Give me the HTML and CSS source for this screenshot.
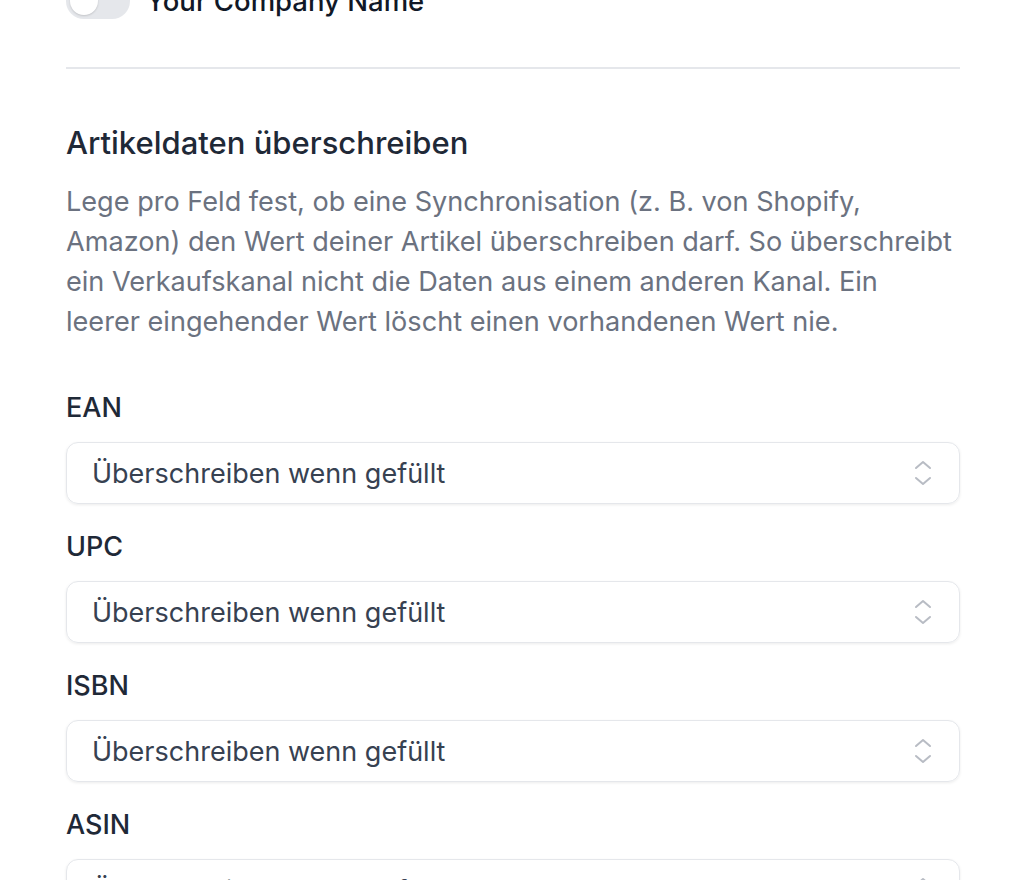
FILE: index.html
```html
<!DOCTYPE html>
<html lang="de">
<head>
    <meta charset="UTF-8">
    <meta name="viewport" content="width=device-width, initial-scale=1.0">
    <title>Einstellungen</title>
    <link rel="stylesheet" href="styles.css">
</head>
<body>
    <div class="settings">
        <div class="company-row">
            <span class="toggle"><span class="knob"></span></span>
            <span class="company-name">Your Company Name</span>
        </div>

        <hr class="divider">

        <section class="overwrite">
            <h2>Artikeldaten überschreiben</h2>
            <p class="hint">Lege pro Feld fest, ob eine Synchronisation (z. B. von Shopify, Amazon) den Wert deiner Artikel überschreiben darf. So überschreibt ein Verkaufskanal nicht die Daten aus einem anderen Kanal. Ein leerer eingehender Wert löscht einen vorhandenen Wert nie.</p>

            <div class="field">
                <label>EAN</label>
                <div class="select">
                    <span>Überschreiben wenn gefüllt</span>
                    <svg class="chevrons" viewBox="0 0 20 28" fill="none" stroke="currentColor" stroke-width="2" stroke-linecap="round" stroke-linejoin="round"><path d="M3 9l7-6 7 6"/><path d="M3 19l7 6 7-6"/></svg>
                </div>
            </div>
            <div class="field">
                <label>UPC</label>
                <div class="select">
                    <span>Überschreiben wenn gefüllt</span>
                    <svg class="chevrons" viewBox="0 0 20 28" fill="none" stroke="currentColor" stroke-width="2" stroke-linecap="round" stroke-linejoin="round"><path d="M3 9l7-6 7 6"/><path d="M3 19l7 6 7-6"/></svg>
                </div>
            </div>
            <div class="field">
                <label>ISBN</label>
                <div class="select">
                    <span>Überschreiben wenn gefüllt</span>
                    <svg class="chevrons" viewBox="0 0 20 28" fill="none" stroke="currentColor" stroke-width="2" stroke-linecap="round" stroke-linejoin="round"><path d="M3 9l7-6 7 6"/><path d="M3 19l7 6 7-6"/></svg>
                </div>
            </div>
            <div class="field">
                <label>ASIN</label>
                <div class="select">
                    <span>Überschreiben wenn gefüllt</span>
                    <svg class="chevrons" viewBox="0 0 20 28" fill="none" stroke="currentColor" stroke-width="2" stroke-linecap="round" stroke-linejoin="round"><path d="M3 9l7-6 7 6"/><path d="M3 19l7 6 7-6"/></svg>
                </div>
            </div>
        </section>
    </div>
</body>
</html>
```

FILE: styles.css
```css
body {
    margin: 0;
    padding: 0;
    background-color: #fff;
    font-family: Inter, "Noto Sans", sans-serif;
    color: #111827;
}

.settings {
    width: 894px;
    margin: -17px 0 0 66px;
}

.company-row {
    display: flex;
    align-items: center;
    gap: 16px;
    height: 36px;
}

.toggle {
    display: flex;
    align-items: center;
    width: 64px;
    height: 36px;
    padding: 4px;
    box-sizing: border-box;
    border-radius: 18px;
    background-color: #e5e7eb;
}

.toggle .knob {
    width: 28px;
    height: 28px;
    border-radius: 50%;
    background-color: #fff;
    box-shadow: 0 1px 2px rgba(0, 0, 0, 0.15);
}

.company-name {
    font-size: 27.5px;
    font-weight: 500;
    color: #111827;
}

.divider {
    border: none;
    border-top: 2px solid #e5e7eb;
    margin: 48px 0 0;
}

.overwrite h2 {
    margin: 54px 0 0;
    font-size: 31px;
    line-height: 40px;
    font-weight: 500;
    color: #1f2937;
}

.hint {
    max-width: 892px;
    margin: 19px 0 0;
    font-size: 27.1px;
    line-height: 40px;
    color: #6b7280;
}

.field {
    margin-top: 48px;
}

.field + .field {
    margin-top: 25px;
}

.field label {
    display: block;
    font-size: 27px;
    line-height: 36px;
    font-weight: 500;
    color: #1f2937;
}

.select {
    display: flex;
    align-items: center;
    justify-content: space-between;
    height: 62px;
    margin-top: 16px;
    padding: 0 26px 0 25px;
    box-sizing: border-box;
    border: 1px solid #e5e7eb;
    border-radius: 12px;
    box-shadow: 0 1px 3px rgba(0, 0, 0, 0.08);
    font-size: 27px;
    color: #374151;
}

.chevrons {
    width: 20px;
    height: 28px;
    color: #b8bcc4;
}
```
